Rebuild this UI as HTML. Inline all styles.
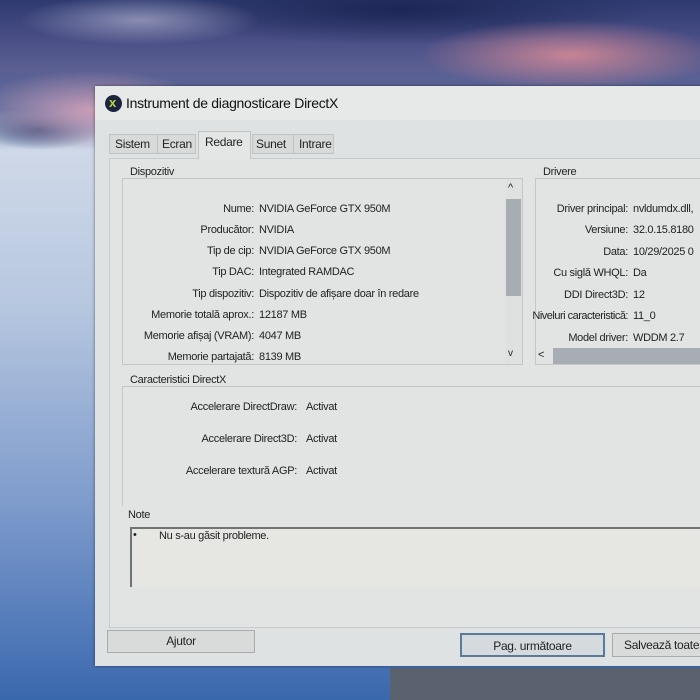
<!DOCTYPE html>
<html><head><meta charset="utf-8"><style>
*{margin:0;padding:0;box-sizing:border-box}
body{width:700px;height:700px;overflow:hidden;position:relative;font-family:"Liberation Sans",sans-serif;font-size:11px;letter-spacing:-0.3px;color:#222;
background:linear-gradient(180deg,#2e3a70 0px,#4a4f86 40px,#5b5f92 70px,#55689a 110px,#cfd8e8 150px,#b8c8e0 300px,#7f9ccc 500px,#4f78b8 640px,#3a68ac 700px)}
.a{position:absolute;white-space:nowrap}
.sky1{position:absolute;left:0;top:0;width:700px;height:150px;background:
radial-gradient(ellipse 120px 40px at 90px 110px,rgba(230,170,190,.8),transparent),
radial-gradient(ellipse 150px 35px at 570px 55px,rgba(220,140,150,.85),transparent),
radial-gradient(ellipse 120px 25px at 140px 20px,rgba(190,190,215,.6),transparent),
radial-gradient(ellipse 250px 35px at 400px 10px,rgba(25,35,80,.85),transparent),
radial-gradient(ellipse 60px 20px at 40px 130px,rgba(40,60,110,.8),transparent)}
.win{position:absolute;left:95px;top:86px;width:620px;height:580px;background:#dfe2e2;box-shadow:0 0 3px rgba(0,0,0,.5)}
.title{position:absolute;left:0;top:0;width:100%;height:34px;background:#e7e9e9}
.r{position:absolute;text-align:right;white-space:nowrap}
.box{position:absolute;border:1px solid #c4c7c7}
.btn{position:absolute;border:1px solid #a9acac;background:#d9dbdb;text-align:center;font-size:12px}
</style></head><body>
<div class="sky1"></div>
<div class="a" style="left:390px;top:668px;width:310px;height:32px;background:#5a6270"></div>
<div class="win">
<div class="title"></div>
<div class="a" style="left:10px;top:9px;width:17px;height:17px;border-radius:50%;background:#1c2440"></div>
<div class="a" style="left:14px;top:9px;font-size:13px;font-weight:bold;color:#b8d83a">x</div>
<div class="a" style="left:31px;top:9px;font-size:14px;color:#111">Instrument de diagnosticare DirectX</div>
<div class="box" style="left:14px;top:72px;width:610px;height:470px;border-color:#c8cbcb;background:#e2e4e3"></div>
<div class="a" style="left:14px;top:48px;height:20px;width:87px;border:1px solid #c0c3c3;background:#d8dada"></div>
<div class="a" style="left:20px;top:51px;font-size:12px">Sistem</div>
<div class="a" style="left:62px;top:48px;height:20px;border-left:1px solid #c0c3c3"></div>
<div class="a" style="left:67px;top:51px;font-size:12px">Ecran</div>
<div class="a" style="left:103px;top:45px;height:28px;width:53px;border:1px solid #c0c3c3;border-bottom:none;background:#e4e6e5"></div>
<div class="a" style="left:110px;top:49px;font-size:12px">Redare</div>
<div class="a" style="left:157px;top:48px;height:20px;width:82px;border:1px solid #c0c3c3;background:#d8dada"></div>
<div class="a" style="left:161px;top:51px;font-size:12px">Sunet</div>
<div class="a" style="left:198px;top:48px;height:20px;border-left:1px solid #c0c3c3"></div>
<div class="a" style="left:204px;top:51px;font-size:12px">Intrare</div>
<div class="box" style="left:27px;top:92px;width:401px;height:187px"></div>
<div class="a" style="left:33px;top:80px;background:#e2e4e3;padding:0 2px">Dispozitiv</div>
<div class="a" style="left:410px;top:93px;width:17px;height:185px;background:#dfe1e1"></div>
<div class="a" style="left:413px;top:96px;font-size:11px">^</div>
<div class="a" style="left:411px;top:113px;width:15px;height:97px;background:#a8acb3"></div>
<div class="a" style="left:413px;top:262px;font-size:10px">v</div>
<div class="r" style="right:461px;top:117px">Nume:</div><div class="a" style="left:164px;top:117px">NVIDIA GeForce GTX 950M</div>
<div class="r" style="right:461px;top:138px">Producător:</div><div class="a" style="left:164px;top:138px">NVIDIA</div>
<div class="r" style="right:461px;top:159px">Tip de cip:</div><div class="a" style="left:164px;top:159px">NVIDIA GeForce GTX 950M</div>
<div class="r" style="right:461px;top:180px">Tip DAC:</div><div class="a" style="left:164px;top:180px">Integrated RAMDAC</div>
<div class="r" style="right:461px;top:202px">Tip dispozitiv:</div><div class="a" style="left:164px;top:202px">Dispozitiv de afișare doar în redare</div>
<div class="r" style="right:461px;top:223px">Memorie totală aprox.:</div><div class="a" style="left:164px;top:223px">12187 MB</div>
<div class="r" style="right:461px;top:244px">Memorie afișaj (VRAM):</div><div class="a" style="left:164px;top:244px">4047 MB</div>
<div class="r" style="right:461px;top:265px">Memorie partajată:</div><div class="a" style="left:164px;top:265px">8139 MB</div>
<div class="box" style="left:440px;top:92px;width:200px;height:187px"></div>
<div class="a" style="left:446px;top:80px;background:#e2e4e3;padding:0 2px">Drivere</div>
<div class="a" style="left:443px;top:263px;font-size:11px">&lt;</div>
<div class="a" style="left:458px;top:262px;width:200px;height:16px;background:#a8acb3"></div>
<div class="r" style="right:87px;top:117px">Driver principal:</div><div class="a" style="left:538px;top:117px">nvldumdx.dll,</div>
<div class="r" style="right:87px;top:138px">Versiune:</div><div class="a" style="left:538px;top:138px">32.0.15.8180</div>
<div class="r" style="right:87px;top:160px">Data:</div><div class="a" style="left:538px;top:160px">10/29/2025 0</div>
<div class="r" style="right:87px;top:181px">Cu siglă WHQL:</div><div class="a" style="left:538px;top:181px">Da</div>
<div class="r" style="right:87px;top:203px">DDI Direct3D:</div><div class="a" style="left:538px;top:203px">12</div>
<div class="r" style="right:87px;top:224px;letter-spacing:-0.5px">Niveluri caracteristică:</div><div class="a" style="left:538px;top:224px">11_0</div>
<div class="r" style="right:87px;top:246px">Model driver:</div><div class="a" style="left:538px;top:246px">WDDM 2.7</div>
<div class="box" style="left:27px;top:300px;width:620px;height:120px;border-right:none;border-bottom:none"></div>
<div class="a" style="left:33px;top:288px;background:#e2e4e3;padding:0 2px">Caracteristici DirectX</div>
<div class="r" style="right:418px;top:315px">Accelerare DirectDraw:</div><div class="a" style="left:211px;top:315px">Activat</div>
<div class="r" style="right:418px;top:347px">Accelerare Direct3D:</div><div class="a" style="left:211px;top:347px">Activat</div>
<div class="r" style="right:418px;top:379px">Accelerare textură AGP:</div><div class="a" style="left:211px;top:379px">Activat</div>
<div class="a" style="left:33px;top:423px">Note</div>
<div class="a" style="left:35px;top:441px;width:600px;height:60px;background:#e6e7e2;border-top:2px solid #707373;border-left:2px solid #707373"></div>
<div class="a" style="left:38px;top:443px">•</div>
<div class="a" style="left:64px;top:444px">Nu s-au găsit probleme.</div>
<div class="btn" style="left:12px;top:544px;width:148px;height:23px;line-height:21px">Ajutor</div>
<div class="btn" style="left:365px;top:547px;width:145px;height:24px;line-height:22px;border:2px solid #5a7a9a;background:#d4dadd">Pag. următoare</div>
<div class="btn" style="left:517px;top:547px;width:120px;height:24px;line-height:22px;text-align:left;padding-left:11px">Salvează toate</div>
</div>
</body></html>
